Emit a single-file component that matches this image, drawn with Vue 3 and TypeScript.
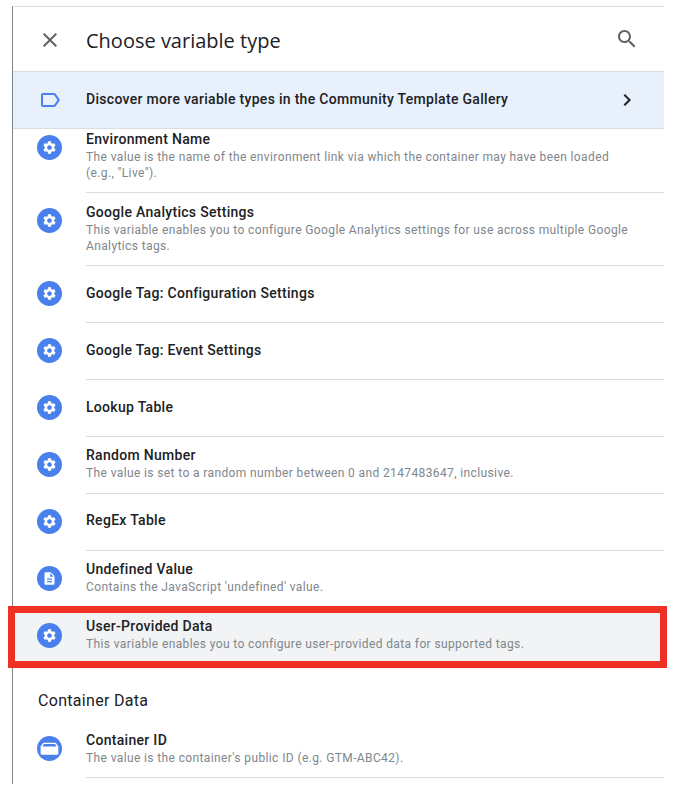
<script setup lang="ts">
type IconKind = 'gear' | 'doc' | 'box'

interface VariableRow {
  title: string
  lines?: string[]
  icon: IconKind
  active?: boolean
  noBorder?: boolean
  tight?: boolean
}

const gearPath = 'M19.14 12.94c.04-.3.06-.61.06-.94 0-.32-.02-.64-.07-.94l2.03-1.58c.18-.14.23-.41.12-.61l-1.92-3.32c-.12-.22-.37-.29-.59-.22l-2.39.96c-.5-.38-1.03-.7-1.62-.94l-.36-2.54c-.04-.24-.24-.41-.48-.41h-3.84c-.24 0-.43.17-.47.41l-.36 2.54c-.59.24-1.13.57-1.62.94l-2.39-.96c-.22-.08-.47 0-.59.22L2.74 8.87c-.12.21-.08.47.12.61l2.03 1.58c-.05.3-.09.63-.09.94s.02.64.07.94l-2.03 1.58c-.18.14-.23.41-.12.61l1.92 3.32c.12.22.37.29.59.22l2.39-.96c.5.38 1.03.7 1.62.94l.36 2.54c.05.24.24.41.48.41h3.84c.24 0 .44-.17.47-.41l.36-2.54c.59-.24 1.13-.56 1.62-.94l2.39.96c.22.08.47 0 .59-.22l1.92-3.32c.12-.22.07-.47-.12-.61l-2.01-1.58zM12 15.6c-1.98 0-3.6-1.62-3.6-3.6s1.62-3.6 3.6-3.6 3.6 1.62 3.6 3.6-1.62 3.6-3.6 3.6z'

const utilities: VariableRow[] = [
  {
    title: 'Environment Name',
    lines: ['The value is the name of the environment link via which the container may have been loaded', '(e.g., "Live").'],
    icon: 'gear',
  },
  {
    title: 'Google Analytics Settings',
    lines: ['This variable enables you to configure Google Analytics settings for use across multiple Google', 'Analytics tags.'],
    icon: 'gear',
  },
  { title: 'Google Tag: Configuration Settings', icon: 'gear' },
  { title: 'Google Tag: Event Settings', icon: 'gear' },
  { title: 'Lookup Table', icon: 'gear' },
  {
    title: 'Random Number',
    lines: ['The value is set to a random number between 0 and 2147483647, inclusive.'],
    icon: 'gear',
    tight: true,
  },
  { title: 'RegEx Table', icon: 'gear', tight: true },
  {
    title: 'Undefined Value',
    lines: ["Contains the JavaScript 'undefined' value."],
    icon: 'doc',
    noBorder: true,
    tight: true,
  },
  {
    title: 'User-Provided Data',
    lines: ['This variable enables you to configure user-provided data for supported tags.'],
    icon: 'gear',
    active: true,
    noBorder: true,
    tight: true,
  },
]

const containerRows: VariableRow[] = [
  {
    title: 'Container ID',
    lines: ["The value is the container's public ID (e.g. GTM-ABC42)."],
    icon: 'box',
  },
]

const sections = [
  { name: '', rows: utilities },
  { name: 'Container Data', rows: containerRows },
]
</script>

<template>
  <div class="panel">
    <header class="header">
      <svg class="icon close" viewBox="0 0 24 24" fill="#5f6368">
        <path d="M19 6.41L17.59 5 12 10.59 6.41 5 5 6.41 10.59 12 5 17.59 6.41 19 12 13.41 17.59 19 19 17.59 13.41 12z" />
      </svg>
      <h1>Choose variable type</h1>
      <svg class="icon search" viewBox="0 0 24 24" fill="#5f6368">
        <path d="M15.5 14h-.79l-.28-.27C15.41 12.59 16 11.11 16 9.5 16 5.91 13.09 3 9.5 3S3 5.91 3 9.5 5.91 16 9.5 16c1.61 0 3.09-.59 4.23-1.57l.27.28v.79l5 4.99L20.49 19l-4.99-5zm-6 0C7.01 14 5 11.99 5 9.5S7.01 5 9.5 5 14 7.01 14 9.5 11.99 14 9.5 14z" />
      </svg>
    </header>

    <div class="banner">
      <svg class="icon" viewBox="0 0 24 24" fill="#4a80ec">
        <path d="M17.63 5.84C17.27 5.33 16.67 5 16 5L5 5.01C3.9 5.01 3 5.9 3 7v10c0 1.1.9 1.99 2 1.99L16 19c.67 0 1.27-.33 1.63-.84L22 12l-4.37-6.16zM16 17H5V7h11l3.55 5L16 17z" />
      </svg>
      <span class="banner-text">Discover more variable types in the Community Template Gallery</span>
      <svg class="icon" viewBox="0 0 24 24" fill="#202124">
        <path d="M10 6L8.59 7.41 13.17 12l-4.58 4.59L10 18l6-6z" />
      </svg>
    </div>

    <div class="list">
      <section v-for="section in sections" :key="section.name">
        <h2 v-if="section.name" class="section-title">{{ section.name }}</h2>
        <div
          v-for="row in section.rows"
          :key="row.title"
          class="row"
          :class="{ active: row.active }"
        >
          <svg class="badge" viewBox="0 0 24 24">
            <circle cx="12" cy="12" r="12" fill="#4a80ec" />
            <path v-if="row.icon === 'gear'" :d="gearPath" fill="#fff" fill-rule="evenodd" transform="translate(4.56 4.56) scale(.62)" />
            <path v-else-if="row.icon === 'doc'" d="M14 2H6c-1.1 0-2 .9-2 2v16c0 1.1.9 2 2 2h12c1.1 0 2-.9 2-2V8l-6-6zM16 18H8v-2h8v2zm0-4H8v-2h8v2zm-3-5V3.5L18.5 9H13z" fill="#fff" transform="translate(4.8 4.8) scale(.6)" />
            <g v-else>
              <path d="M6 6.500h12l2.500 3.500v6.500a1.500 1.500 0 0 1-1.500 1.500H5a1.500 1.500 0 0 1-1.500-1.500V10z" fill="#fff" />
              <path d="M6.600 7.700h10.800l1.400 2.300H5.200z" fill="#4a80ec" />
            </g>
          </svg>
          <div class="body" :class="{ plain: row.noBorder, tight: row.tight }">
            <div class="title">{{ row.title }}</div>
            <div v-for="line in row.lines" :key="line" class="desc">{{ line }}</div>
          </div>
        </div>
      </section>
    </div>
  </div>
</template>

<style>
html,
body {
  background: #fff;
}
</style>

<style scoped>
.panel {
  width: 651px;
  height: 777px;
  margin: 6px 0 0 12px;
  border-top: 1px solid #dadce0;
  border-left: 1px solid #80868b;
  font-family: Roboto, "Liberation Sans", sans-serif;
  background: #fff;
}

.header {
  display: flex;
  align-items: center;
  height: 64px;
  padding: 0 16px 0 25px;
  border-bottom: 1px solid #dadce0;
}

.icon {
  flex: none;
  width: 24px;
  height: 24px;
}

.close {
  margin-top: 2px;
}

.header h1 {
  flex: 1;
  margin: 3px 0 0 24px;
  font-family: "Open Sans", Roboto, sans-serif;
  font-size: 20px;
  font-weight: 400;
  color: #202124;
}

.search {
  margin-right: 9px;
}

.banner {
  position: relative;
  z-index: 1;
  display: flex;
  align-items: center;
  height: 56px;
  padding: 0 25px;
  border-bottom: 1px solid #dadce0;
  background: #e8f0fb;
}

.banner-text {
  flex: 1;
  margin: -2px 0 0 24px;
  font-size: 14px;
  font-weight: 500;
  letter-spacing: 0.3px;
  color: #202124;
}

.list {
  margin-top: -9px;
}

.row {
  position: relative;
  display: flex;
}

.row.active {
  background: #f1f3f4;
}

/* callout drawn over the row, sticks out past the panel edge */
.row.active::after {
  content: "";
  position: absolute;
  top: -2px;
  left: -5px;
  right: -3px;
  bottom: -3px;
  z-index: 2;
  border: 7px solid #ee3124;
  pointer-events: none;
}

.badge {
  flex: none;
  width: 25px;
  height: 25px;
  margin: 15px 24px 0;
}

.body {
  flex: 1;
  display: flex;
  flex-direction: column;
  justify-content: center;
  box-sizing: border-box;
  min-height: 57px;
  padding: 9px 0 11px;
  border-bottom: 1px solid #dadce0;
}

.body.tight {
  padding: 8px 0 12px;
}

.body.plain {
  border-bottom-color: transparent;
}

.title {
  font-size: 14px;
  font-weight: 500;
  line-height: 20px;
  letter-spacing: 0.3px;
  color: #202124;
}

.desc {
  font-size: 12px;
  line-height: 16px;
  letter-spacing: 0.38px;
  color: #80868b;
}

.section-title {
  height: 56px;
  margin: 0;
  padding: 24px 0 0 25px;
  box-sizing: border-box;
  font-size: 16px;
  font-weight: 400;
  line-height: 24px;
  letter-spacing: 0.3px;
  color: #202124;
}
</style>
